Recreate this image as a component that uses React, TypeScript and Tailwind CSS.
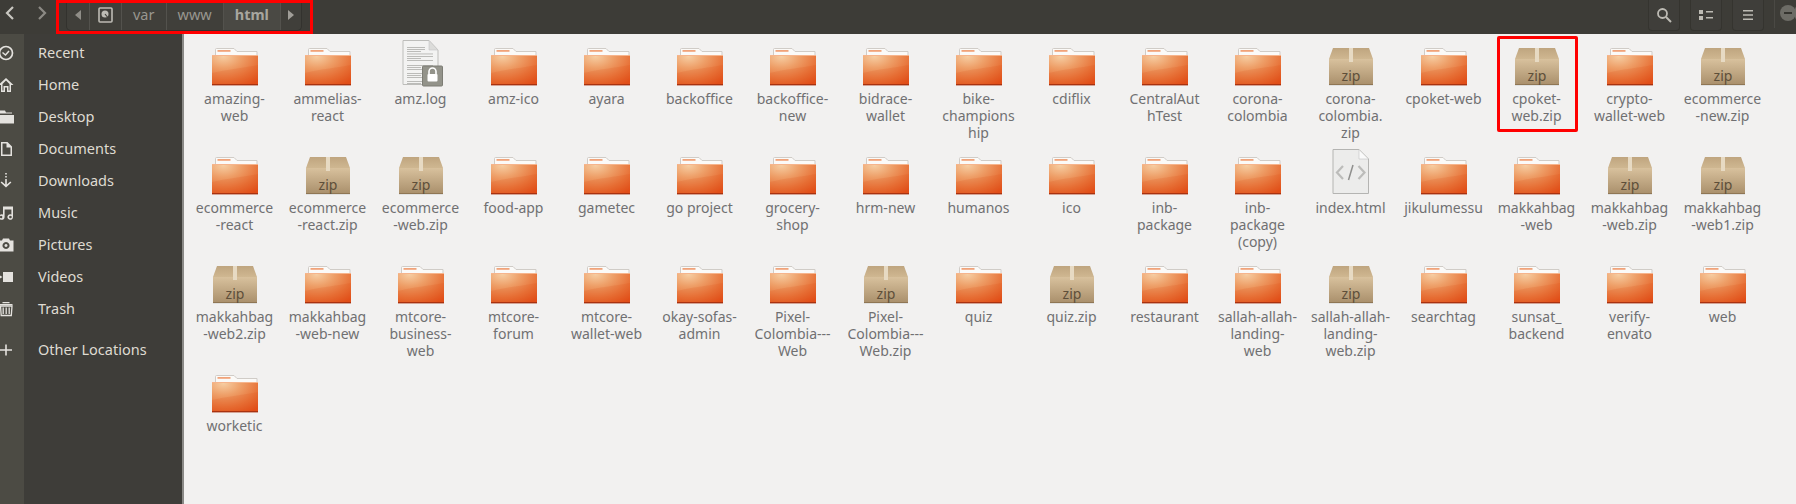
import React from 'react';

const FONT = '[font-family:"Noto_Sans",sans-serif]';

const Folder = () => (
  <svg width="48" height="48" viewBox="0 0 48 48">
    <defs>
      <radialGradient id="folderFill" cx="0.25" cy="0.05" r="1.100">
        <stop offset="0" stopColor="#f6cda2" />
        <stop offset="0.35" stopColor="#ee9f68" />
        <stop offset="0.7" stopColor="#e8743a" />
        <stop offset="1" stopColor="#e2501a" />
      </radialGradient>
    </defs>
    <path d="M4.500 17V9.500a1 1 0 0 1 1-1h17.500l3 3h20v6z" fill="#fbfaf8" stroke="#d0ccc7" strokeWidth="1" />
    <rect x="6.500" y="10" width="13" height="1.800" fill="#f0a37a" />
    <rect x="1" y="15" width="46" height="30" rx="1" fill="url(#folderFill)" />
    <path d="M1 33C16 29 32 28 47 25V44a1 1 0 0 1-1 1H2a1 1 0 0 1-1-1z" fill="#d9480f" opacity="0.14" />
    <rect x="1" y="44" width="46" height="1.400" fill="#a9320f" />
    <rect x="1" y="15" width="46" height="1" fill="#f6b48c" />
  </svg>
);

const Zip = () => (
  <svg width="48" height="48" viewBox="0 0 48 48">
    <defs>
      <linearGradient id="zipBody" x1="0" y1="0" x2="0" y2="1">
        <stop offset="0" stopColor="#d8c19d" />
        <stop offset="1" stopColor="#a98f6b" />
      </linearGradient>
      <linearGradient id="zipLid" x1="0" y1="0" x2="0" y2="1">
        <stop offset="0" stopColor="#bfa57f" />
        <stop offset="1" stopColor="#cfb791" />
      </linearGradient>
    </defs>
    <rect x="2" y="44" width="44" height="2" fill="#000" opacity="0.07" />
    <path d="M6 8h36l4 11H2z" fill="url(#zipLid)" />
    <path d="M2 19h44v25a1 1 0 0 1-1 1H3a1 1 0 0 1-1-1z" fill="url(#zipBody)" />
    <rect x="2" y="44" width="44" height="1" fill="#8f7654" />
    <rect x="22" y="8" width="4" height="14" fill="#e7dac3" />
    <text x="24" y="41" textAnchor="middle" fontSize="14" fontFamily="Noto Sans, sans-serif" fill="#5e4f3a">zip</text>
  </svg>
);

const lines = [2, 4, 6, 8.5, 11, 13, 15, 20, 22, 24, 28, 30, 32, 36, 38];

const Log = () => (
  <svg width="48" height="48" viewBox="0 0 48 48">
    <path d="M6 .5h26L41 10v34.500H6z" fill="#f3f3f2" stroke="#bdbdba" />
    <path d="M32 .5V10h9z" fill="#dcdcda" stroke="#c8c8c6" strokeWidth="0.6" />
    {lines.map((l, i) => (
      <rect key={i} x="10" y={5 + l} width={i % 3 === 2 ? 14 : i < 3 ? 18 : 26} height="0.9" fill="#b5b5b2" />
    ))}
    <rect x="25.500" y="26" width="20" height="20" rx="1" fill="#93938a" stroke="#7d7d75" />
    <path d="M32 34v-2.500a3.500 3.500 0 0 1 7 0V34" fill="none" stroke="#fff" strokeWidth="1.600" />
    <rect x="30.500" y="34" width="10" height="7.500" rx="1" fill="#fff" />
  </svg>
);

const Html = () => (
  <svg width="48" height="48" viewBox="0 0 48 48">
    <path d="M6 .5h26L41.500 10v34.500H6z" fill="#ececeb" stroke="#b4b4b2" />
    <path d="M32 .5V10h9.500z" fill="#fafafa" stroke="#c4c4c2" strokeWidth="0.6" />
    <path d="M16 17l-6 6.500 6 6.500M31.500 17l6 6.500-6 6.500" fill="none" stroke="#bcbcba" strokeWidth="2.200" />
    <path d="M26 16l-4.500 15" fill="none" stroke="#8f8f8d" strokeWidth="1.500" />
  </svg>
);

const items = [
  'amazing-|web', 'ammelias-|react', 'amz.log', 'amz-ico', 'ayara', 'backoffice', 'backoffice-|new', 'bidrace-|wallet', 'bike-|champions|hip', 'cdiflix', 'CentralAut|hTest', 'corona-|colombia', 'corona-|colombia.|zip', 'cpoket-web', 'cpoket-|web.zip', 'crypto-|wallet-web', 'ecommerce|-new.zip',
  'ecommerce|-react', 'ecommerce|-react.zip', 'ecommerce|-web.zip', 'food-app', 'gametec', 'go project', 'grocery-|shop', 'hrm-new', 'humanos', 'ico', 'inb-|package', 'inb-|package|(copy)', 'index.html', 'jikulumessu', 'makkahbag|-web', 'makkahbag|-web.zip', 'makkahbag|-web1.zip',
  'makkahbag|-web2.zip', 'makkahbag|-web-new', 'mtcore-|business-|web', 'mtcore-|forum', 'mtcore-|wallet-web', 'okay-sofas-|admin', 'Pixel-|Colombia---|Web', 'Pixel-|Colombia---|Web.zip', 'quiz', 'quiz.zip', 'restaurant', 'sallah-allah-|landing-|web', 'sallah-allah-|landing-|web.zip', 'searchtag', 'sunsat_|backend', 'verify-|envato', 'web',
  'worketic',
];

const FileIcon = ({ name }: { name: string }) => {
  const plain = name.replace(/\|/g, '');
  if (plain.endsWith('.zip')) return <Zip />;
  if (plain.endsWith('.log')) return <Log />;
  if (plain.endsWith('.html')) return <Html />;
  return <Folder />;
};

const sideIcons: Record<string, React.ReactNode> = {
  Recent: (
    <>
      <circle cx="8" cy="8" r="6.500" fill="none" stroke="currentColor" strokeWidth="1.700" />
      <path d="M4.500 7.500l3 2.500 3.500-4" fill="none" stroke="currentColor" strokeWidth="1.500" />
    </>
  ),
  Home: <path d="M8 1L.5 8H3v7h4v-4.500h2V15h4V8h2.500zM8 3.500l3.500 3.500v6.500H10.500V9h-5v4.500H4.500V7z" fill="currentColor" fillRule="evenodd" />,
  Desktop: <path d="M1 1.500h6l1 2h6v1H1zM1 6h15v8.500H1z" fill="currentColor" />,
  Documents: <path d="M3 1h6.500L14 5.500V15H3zM4.500 2.500v11h8V6.500H8.500v-4z" fill="currentColor" fillRule="evenodd" />,
  Downloads: <path d="M7.200 0h1.600v1.500H7.200zM7.200 3h1.600v1.500H7.200zM7.200 6h1.600v5.500l3.500-3 1.100 1.100L8 14.500 2.600 9.600l1.100-1.100 3.500 3z" fill="currentColor" />,
  Music: <path d="M5 1.500h10v10.500a2.800 2.800 0 1 1-1.600-2.500V4.500H6.600V12A2.800 2.800 0 1 1 5 9.500zM3 10.700a1.300 1.300 0 1 0 .01 0zM12.400 10.700a1.300 1.300 0 1 0 .01 0z" fill="currentColor" fillRule="evenodd" />,
  Pictures: <path d="M5 1.500h6l1 2h3.500V14.500H.5V3.500H4zM8 5a3.500 3.500 0 1 0 .01 0zM8 7a1.500 1.500 0 1 1-.01 0z" fill="currentColor" fillRule="evenodd" />,
  Videos: <path d="M5 3h10v10H5zM1.500 6.300L4.500 8l-3 1.700z" fill="currentColor" />,
  Trash: (
    <>
      <path d="M1.500 3h13v1.200h-13zM4.500 1h7v1.200h-7z" fill="currentColor" />
      <path d="M2.500 5h11.500l-.7 9.500H3.200zM5.200 6.500v6.500M8.200 6.500v6.500M11.200 6.500v6.500" fill="none" stroke="currentColor" strokeWidth="1.300" />
    </>
  ),
  'Other Locations': <path d="M7.200 2.500h1.600v4.700H14v1.600H8.800V13.500H7.200V8.800H2V7.200h5.200z" fill="currentColor" />,
};

const SideRow = ({ label, last }: { label: string; last?: boolean }) => (
  <div className={`flex h-[32px] items-center ${last ? 'mt-[9px]' : ''}`}>
    <div className="flex h-full w-[24px] shrink-0 items-center overflow-hidden">
      <svg width="16" height="16" viewBox="0 0 16 16" className="ml-[-2px] shrink-0 text-[#e4e2de]">
        {sideIcons[label]}
      </svg>
    </div>
    <span className="pl-[14px] text-[14.5px] text-[#dfdbd2]">{label}</span>
  </div>
);

const HeaderButton = ({ children }: { children: React.ReactNode }) => (
  <div className="flex h-[31px] w-[32px] items-center justify-center rounded-b-[4px] border border-t-0 border-[#35342f] bg-[#3f3e3a]">
    {children}
  </div>
);

const Crumb = ({ children, bold }: { children: React.ReactNode; bold?: boolean }) => (
  <div className={`flex h-full items-center border-r border-[#53524d] px-[11px] text-[14.5px] ${bold ? 'bg-[#4a4944] font-bold text-[#a8a69f]' : 'text-[#98968f]'}`}>
    {children}
  </div>
);

export default function App() {
  return (
    <div className={`relative flex h-[504px] w-[1796px] flex-col overflow-hidden bg-[#f2f1f0] ${FONT}`}>
      <header className="flex h-[34px] shrink-0 items-start bg-[#3d3c37]">
        <svg width="16" height="16" viewBox="0 0 16 16" className="ml-[2px] mt-[5px] shrink-0">
          <path d="M11 2L5 8l6 6" fill="none" stroke="#c9c7c1" strokeWidth="2.200" />
        </svg>
        <svg width="16" height="16" viewBox="0 0 16 16" className="ml-[16px] mt-[5px] shrink-0">
          <path d="M5 2l6 6-6 6" fill="none" stroke="#8c8a84" strokeWidth="2.200" />
        </svg>
        <nav className="ml-[16px] flex h-[31px] w-[236px] items-stretch overflow-hidden rounded-b-[5px] border border-t-0 border-[#33322e] bg-[#403f3a]">
          <div className="flex w-[23px] items-center justify-center border-r border-[#53524d]">
            <svg width="8" height="12" viewBox="0 0 8 12"><path d="M7 1v10L1 6z" fill="#8f8d87" /></svg>
          </div>
          <div className="flex w-[32px] items-center justify-center border-r border-[#53524d]">
            <svg width="15" height="16" viewBox="0 0 15 16">
              <rect x="1" y="1" width="13" height="14" rx="1" fill="none" stroke="#bdbbb4" strokeWidth="1.600" />
              <circle cx="7" cy="7" r="3.500" fill="#bdbbb4" />
              <path d="M7 7l4 5" stroke="#403f3a" strokeWidth="1.200" />
            </svg>
          </div>
          <Crumb>var</Crumb>
          <Crumb>www</Crumb>
          <Crumb bold>html</Crumb>
          <div className="flex flex-1 items-center justify-center">
            <svg width="8" height="12" viewBox="0 0 8 12"><path d="M1 1v10l6-5z" fill="#a09e98" /></svg>
          </div>
        </nav>
        <div className="flex-1" />
        <div className="flex items-start gap-[10px]">
          <HeaderButton>
            <svg width="16" height="16" viewBox="0 0 16 16">
              <circle cx="6.500" cy="6.500" r="4.500" fill="none" stroke="#bdbbb4" strokeWidth="1.800" />
              <path d="M10 10l5 5" stroke="#bdbbb4" strokeWidth="2" />
            </svg>
          </HeaderButton>
          <HeaderButton>
            <svg width="14" height="12" viewBox="0 0 14 12">
              <path d="M0 1h4v4H0zM0 7h4v4H0zM7 2h7v1.500H7zM7 8h7v1.500H7z" fill="#bdbbb4" />
            </svg>
          </HeaderButton>
          <HeaderButton>
            <svg width="12" height="12" viewBox="0 0 12 12">
              <path d="M1 1h10v1.600H1zM1 5.200h10v1.600H1zM1 9.400h10V11H1z" fill="#bdbbb4" />
            </svg>
          </HeaderButton>
        </div>
        <div className="ml-[10px] h-[28px] w-px bg-[#4a4944]" />
        <div className="ml-[5px] mr-[-3px] mt-[5px] flex h-[16px] w-[16px] shrink-0 items-center justify-center rounded-full bg-[#6d6c66]">
          <div className="h-[1.500px] w-[8px] bg-[#35342f]" />
        </div>
        <div className="ml-[2px] mr-[-8px] mt-[5px] h-[16px] w-[9px] shrink-0 rounded-full bg-[#6d6c66]" />
      </header>

      <div className="flex min-h-0 flex-1">
        <aside className="relative w-[184px] shrink-0 border-r-2 border-[#8a8986] bg-[#3e3d39] pt-[3px]">
          <div className="absolute inset-y-0 left-0 w-[24px] bg-[#4c4b44]" />
          <div className="relative">
            {['Recent', 'Home', 'Desktop', 'Documents', 'Downloads', 'Music', 'Pictures', 'Videos', 'Trash'].map((label) => (
              <SideRow key={label} label={label} />
            ))}
            <SideRow label="Other Locations" last />
          </div>
        </aside>

        <main className="grid flex-1 auto-rows-[109px] grid-cols-[repeat(17,93px)] pl-[4px] pt-[6px]">
          {items.map((name) => (
            <div key={name} className="flex flex-col items-center">
              <FileIcon name={name} />
              <div className="mt-[2px] text-center text-[14px] leading-[17px] text-[#707072]">
                {name.split('|').map((part) => (
                  <div key={part} className="whitespace-nowrap">{part}</div>
                ))}
              </div>
            </div>
          ))}
        </main>
      </div>

      <div className="absolute left-[56px] top-0 h-[34px] w-[257px] border-[3px] border-[#ff0000]" />
      <div className="absolute left-[1497px] top-[36px] h-[96px] w-[81px] rounded-[2px] border-[3px] border-[#ff0000]" />
    </div>
  );
}
